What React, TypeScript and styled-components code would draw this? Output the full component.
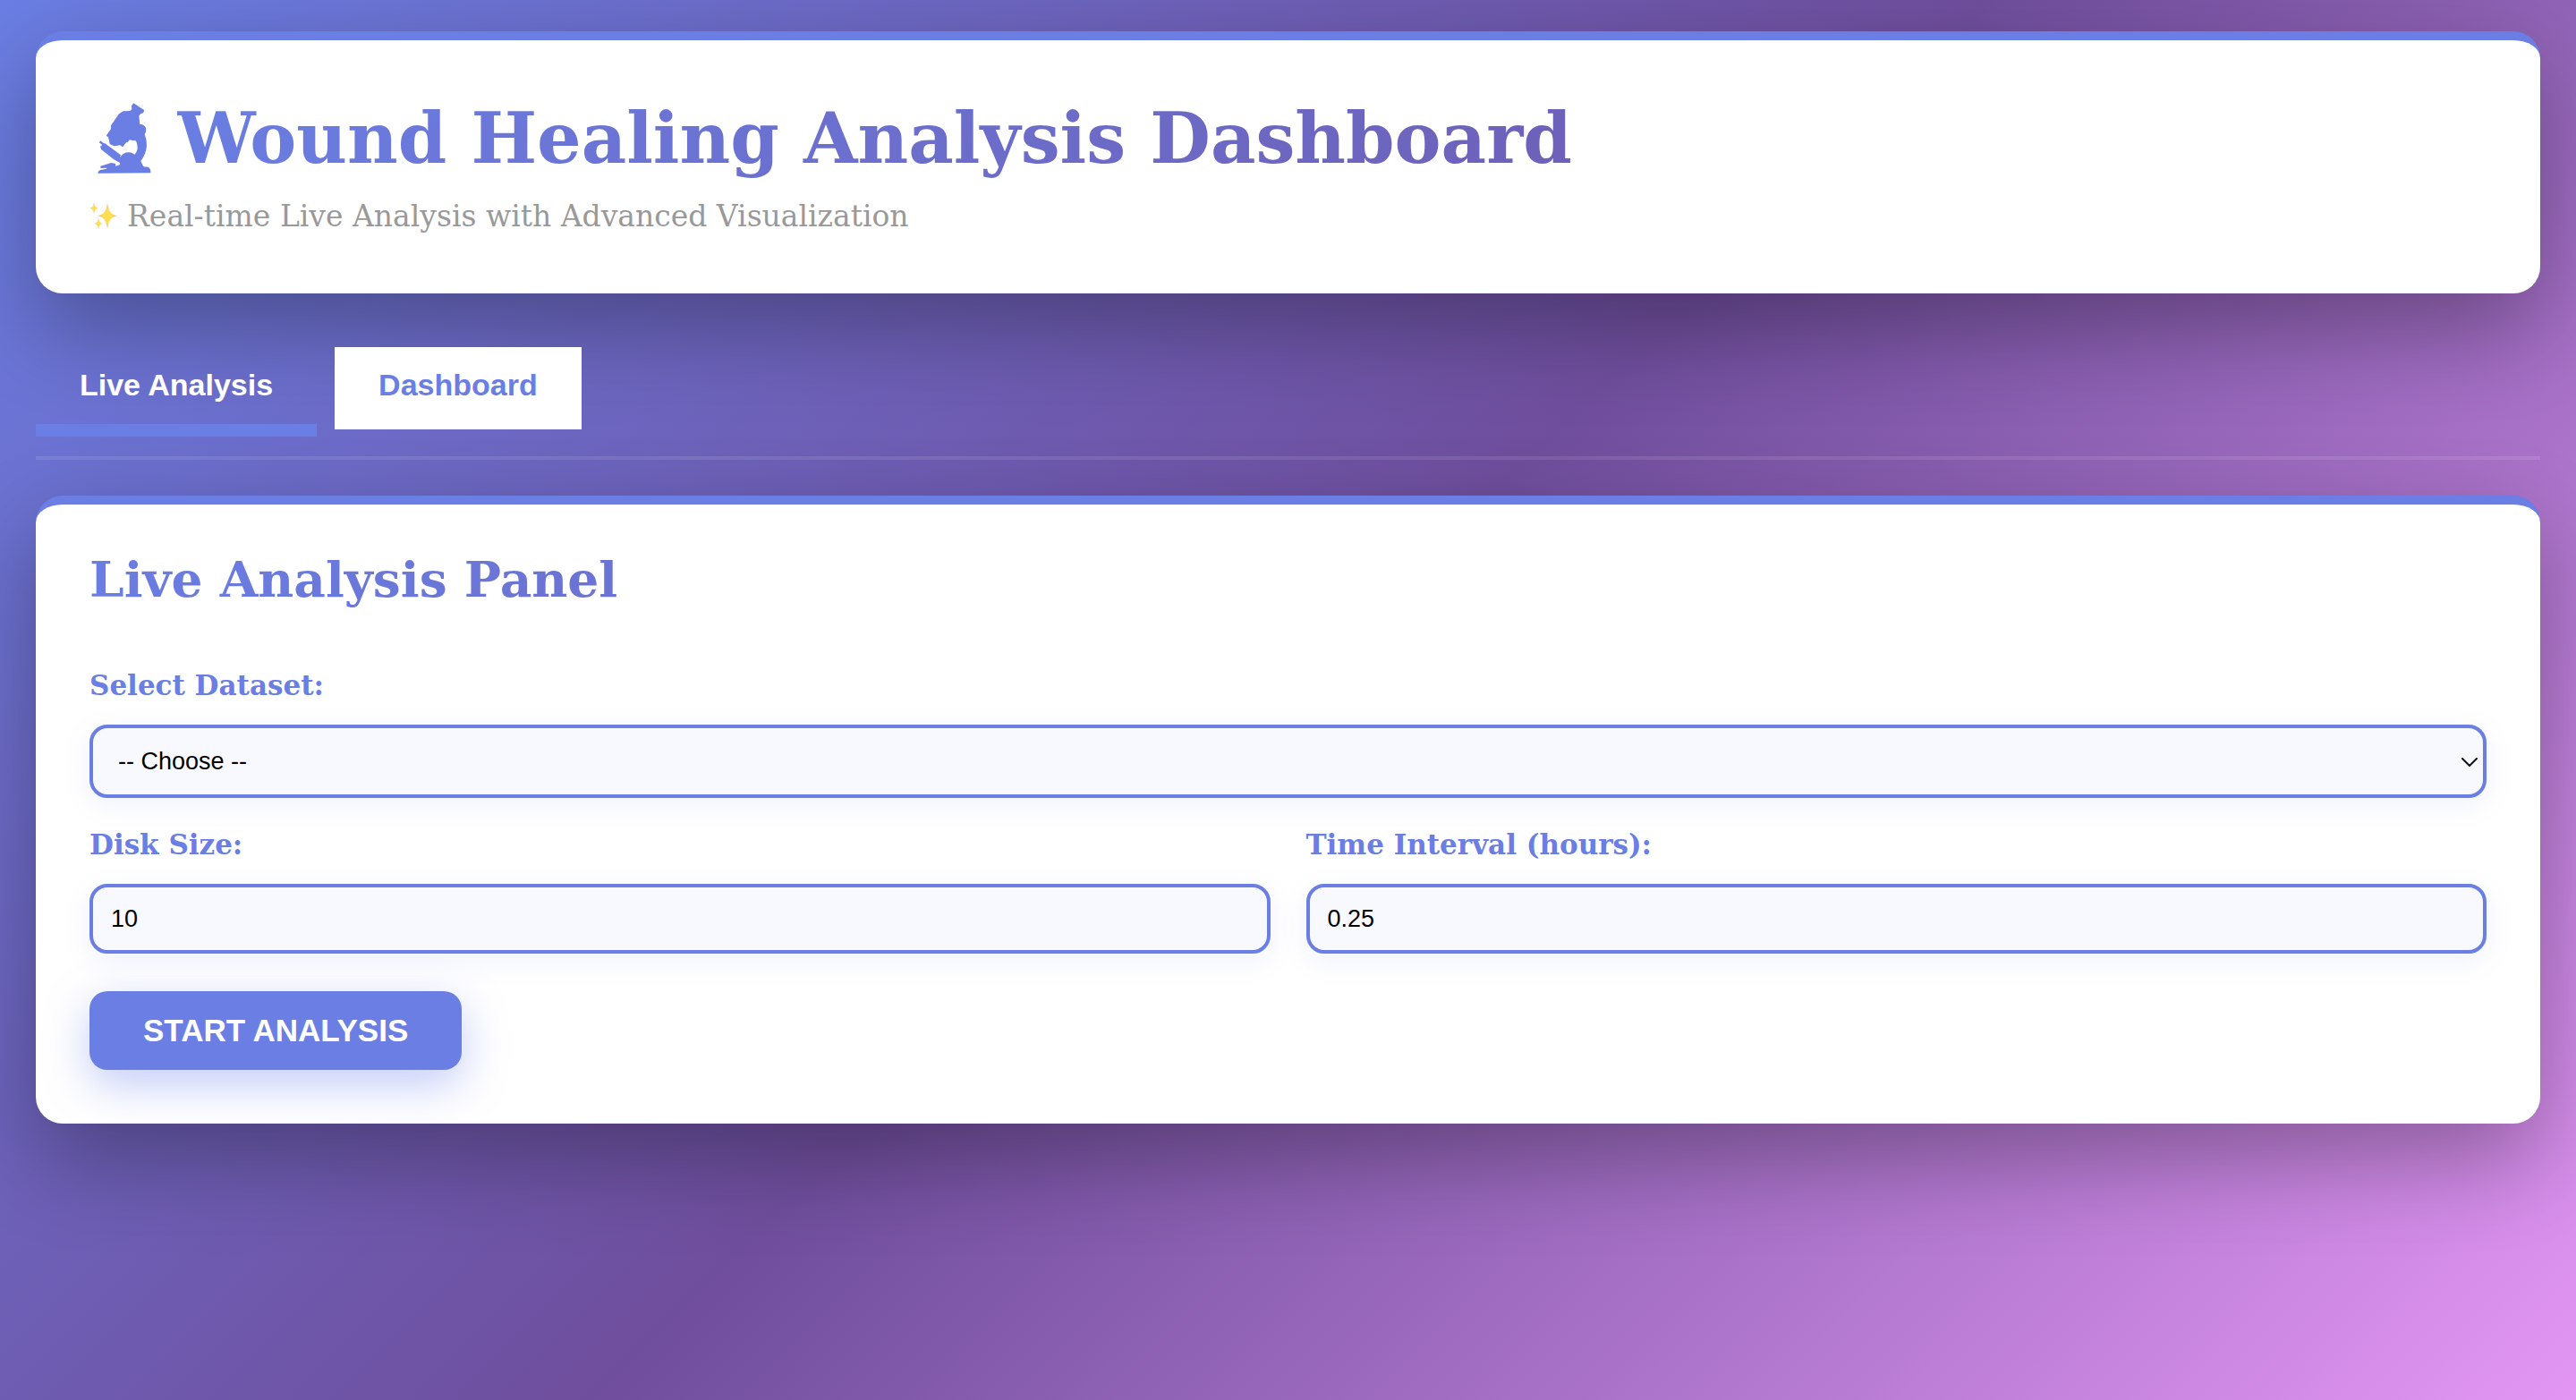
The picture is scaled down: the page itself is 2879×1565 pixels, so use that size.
import React, { useState } from "react";
import styled, { createGlobalStyle, css } from "styled-components";

const blue = "#6a7ee3";
const violet = "#6f4e9d";
const slab = `Rockwell, "DejaVu Serif", serif`;
const sans = `Arial, "Liberation Sans", sans-serif`;

const GlobalStyle = createGlobalStyle`
  *, *::before, *::after { box-sizing: border-box; }
  body {
    margin: 0;
    min-height: 100vh;
    background: linear-gradient(135deg, ${blue} 0%, ${violet} 50%, #e396f4 100%) no-repeat;
    background-attachment: fixed;
    font-family: ${slab};
  }
`;

const Page = styled.div`
  padding: 35px 40px 40px;
`;

const Card = styled.section`
  background: #fff;
  border-top: 10px solid ${blue};
  border-radius: 30px;
  box-shadow: 0 40px 100px rgba(0, 0, 0, 0.3);
`;

const HeaderCard = styled(Card).attrs({ as: "header" })`
  padding: 60px 60px 62px;
`;

const gradientText = css`
  background: linear-gradient(135deg, ${blue} 0%, ${violet} 100%);
  -webkit-background-clip: text;
  background-clip: text;
  color: transparent;
`;

const TitleRow = styled.div`
  display: flex;
  align-items: center;
  gap: 28px;
  padding-left: 8px;
`;

const Title = styled.h1`
  ${gradientText}
  flex: 1;
  margin: 0;
  font-size: 78px;
  line-height: 100px;
  font-weight: 700;
`;

const Subtitle = styled.p`
  display: flex;
  align-items: center;
  gap: 10px;
  margin: 13px 0 0;
  color: #999;
  font-size: 33px;
  line-height: 48px;
`;

const Tabs = styled.nav`
  display: flex;
  align-items: flex-start;
  gap: 20px;
  height: 126px;
  margin: 60px 0 40px;
  border-bottom: 4px solid rgba(255, 255, 255, 0.1);
`;

const Tab = styled.button<{ $active: boolean }>`
  padding: 22px 49px 30px;
  border: 0;
  background: #fff;
  color: ${blue};
  font: 700 34px/40px ${sans};
  cursor: pointer;
  ${(p) =>
    p.$active &&
    css`
      padding-bottom: 24px;
      border-bottom: 14px solid ${blue};
      background: transparent;
      color: #fff;
    `}
`;

const Panel = styled(Card)`
  padding: 48px 60px 60px;
`;

const PanelTitle = styled.h2`
  ${gradientText}
  margin: 0 0 62px;
  font-size: 55px;
  line-height: 72px;
  font-weight: 700;
`;

const Form = styled.form`
  display: grid;
  grid-template-columns: 1fr 1fr;
  gap: 32px 40px;
`;

const Field = styled.div<{ $wide?: boolean }>`
  display: flex;
  flex-direction: column;
  gap: 24px;
  ${(p) => p.$wide && "grid-column: 1 / -1;"}
`;

const Label = styled.label`
  color: ${blue};
  font-size: 31px;
  line-height: 40px;
  font-weight: 700;
`;

const controlStyle = css`
  width: 100%;
  border: 4px solid ${blue};
  border-radius: 20px;
  background: #f8f9ff;
  box-shadow: 0 8px 30px rgba(102, 126, 234, 0.1);
  color: #000;
  font: 400 27px/30px ${sans};
`;

const SelectWrap = styled.div`
  position: relative;
  display: flex;
`;

const Select = styled.select`
  ${controlStyle}
  appearance: none;
  height: 82px;
  padding: 0 60px 0 28px;
`;

const Chevron = styled.svg`
  position: absolute;
  right: 10px;
  top: 50%;
  width: 18px;
  height: 10px;
  margin-top: -4px;
  pointer-events: none;
`;

const Input = styled.input`
  ${controlStyle}
  height: 78px;
  padding: 0 20px;
`;

const StartButton = styled.button`
  justify-self: start;
  margin-top: 10px;
  padding: 22px 60px;
  border: 0;
  border-radius: 20px;
  background: ${blue};
  box-shadow: 0 16px 50px rgba(102, 126, 234, 0.4);
  color: #fff;
  font: 700 35px/44px ${sans};
  text-transform: uppercase;
  cursor: pointer;
`;

const MicroscopeIcon = () => (
  <svg width="62" height="80" viewBox="54 76 184 240" fill={blue} aria-hidden="true">
    <path d="M177 77 L213 101 L209 110 L200 113 L195 120 L198 148 Q212 147 218 160 Q221 172 214 182 Q222 200 221 220 Q218 250 201 271 L210 290 L226 291 Q235 296 234 311 L58 312 Q56 305 66 301 L86 297 L87 294 L66 295 L66 288 L102 277 L117 280 L116 288 L130 284 L132 278 Q110 267 90 249 L68 232 L65 222 L72 217 L61 209 L66 203 L76 211 L81 212 L134 251 L131 259 Q142 242 160 242 Q172 242 180 249 Q190 240 190 226 Q189 208 183 202 L175 202 L163 200 L158 207 L153 208 L140 224 L132 218 L112 221 L97 214 L92 191 L85 186 L101 163 L101 152 L128 113 L142 104 L165 103 L171 97 L170 86 Z" />
  </svg>
);

const SparklesIcon = () => (
  <svg width="32" height="32" viewBox="0 0 96 96" aria-hidden="true">
    <defs>
      <radialGradient id="spark">
        <stop offset="0" stopColor="#fde047" />
        <stop offset="0.5" stopColor="#fbdc60" />
        <stop offset="1" stopColor="#f3ad63" />
      </radialGradient>
    </defs>
    <g fill="url(#spark)">
      <path d="M60 1 Q63 42 94 46 Q63 50 60 91 Q57 50 26 46 Q57 42 60 1Z" />
      <path d="M15 0 Q17 18 28 20 Q17 22 15 40 Q13 22 2 20 Q13 18 15 0Z" />
      <path d="M30 52 Q32 70 43 72 Q32 74 30 92 Q28 74 17 72 Q28 70 30 52Z" />
    </g>
  </svg>
);

const tabs = ["Live Analysis", "Dashboard"];

export default function App() {
  const [active, setActive] = useState(tabs[0]);
  const [diskSize, setDiskSize] = useState("10");
  const [interval, setIntervalHours] = useState("0.25");

  return (
    <>
      <GlobalStyle />
      <Page>
        <HeaderCard>
          <TitleRow>
            <MicroscopeIcon />
            <Title>Wound Healing Analysis Dashboard</Title>
          </TitleRow>
          <Subtitle>
            <SparklesIcon />
            Real-time Live Analysis with Advanced Visualization
          </Subtitle>
        </HeaderCard>

        <Tabs>
          {tabs.map((name) => (
            <Tab key={name} type="button" $active={name === active} onClick={() => setActive(name)}>
              {name}
            </Tab>
          ))}
        </Tabs>

        <Panel>
          <PanelTitle>Live Analysis Panel</PanelTitle>
          <Form onSubmit={(e) => e.preventDefault()}>
            <Field $wide>
              <Label htmlFor="dataset">Select Dataset:</Label>
              <SelectWrap>
                <Select id="dataset" defaultValue="">
                  <option value="">-- Choose --</option>
                </Select>
                <Chevron viewBox="0 0 18 10" fill="none" stroke="#111" strokeWidth="2" strokeLinecap="round" aria-hidden="true">
                  <path d="M1 1l8 8 8-8" />
                </Chevron>
              </SelectWrap>
            </Field>
            <Field>
              <Label htmlFor="disk-size">Disk Size:</Label>
              <Input id="disk-size" inputMode="numeric" value={diskSize} onChange={(e) => setDiskSize(e.target.value)} />
            </Field>
            <Field>
              <Label htmlFor="interval">Time Interval (hours):</Label>
              <Input id="interval" inputMode="decimal" value={interval} onChange={(e) => setIntervalHours(e.target.value)} />
            </Field>
            <StartButton type="submit">Start Analysis</StartButton>
          </Form>
        </Panel>
      </Page>
    </>
  );
}
